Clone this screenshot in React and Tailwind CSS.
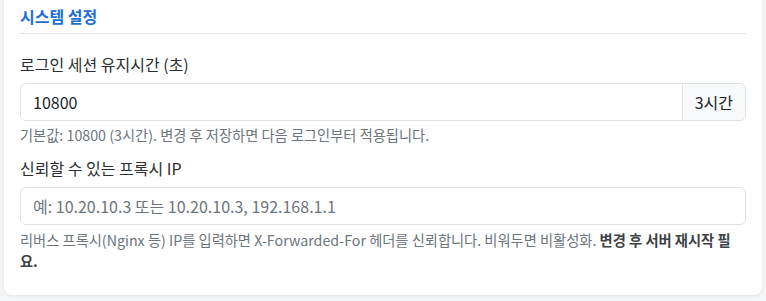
export default function App() {
  return (
    <div
      className="min-h-screen bg-[#f4f5f7] px-1 pb-2"
      style={{ fontFamily: '"Noto Sans CJK KR", "Noto Sans", sans-serif' }}
    >
      <div className="rounded-b-lg bg-white px-4 pt-1 pb-6 shadow-[0_1px_3px_rgba(0,0,0,0.08)]">
        <div className="border-b border-[#e3e5e8] pb-[5px] text-[16px] leading-[24px] font-semibold text-[#1c6fd6]">
          시스템 설정
        </div>

        <div className="mt-[18px] text-[16px] leading-[24px] text-[#2b2f33]">
          로그인 세션 유지시간 (초)
        </div>
        <div className="mt-[7px] flex h-[38px] rounded-md border border-[#dee2e6]">
          <input
            className="min-w-0 flex-1 rounded-l-md bg-white px-3 text-[16px] text-[#212529] outline-none"
            defaultValue="10800"
          />
          <span className="flex items-center rounded-r-md border-l border-[#dee2e6] bg-[#f8f9fa] px-3 text-[16px] text-[#212529]">
            3시간
          </span>
        </div>
        <p className="mt-[3px] text-[14.25px] leading-[21px] text-[#6c757d]">
          기본값: 10800 (3시간). 변경 후 저장하면 다음 로그인부터 적용됩니다.
        </p>

        <div className="mt-[11px] text-[16px] leading-[24px] text-[#2b2f33]">
          신뢰할 수 있는 프록시 IP
        </div>
        <input
          className="mt-[7px] block h-[38px] w-full rounded-md border border-[#dee2e6] bg-white px-3 text-[16px] text-[#212529] outline-none placeholder:text-[#6c757d]"
          placeholder="예: 10.20.10.3 또는 10.20.10.3, 192.168.1.1"
        />
        <p className="mt-1 text-[14.25px] leading-[21px] text-[#6c757d]">
          리버스 프록시(Nginx 등) IP를 입력하면 X-Forwarded-For 헤더를 신뢰합니다. 비워두면 비활성화.{" "}
          <strong className="font-bold text-[#3d4248]">변경 후 서버 재시작 필요.</strong>
        </p>
      </div>
    </div>
  );
}
